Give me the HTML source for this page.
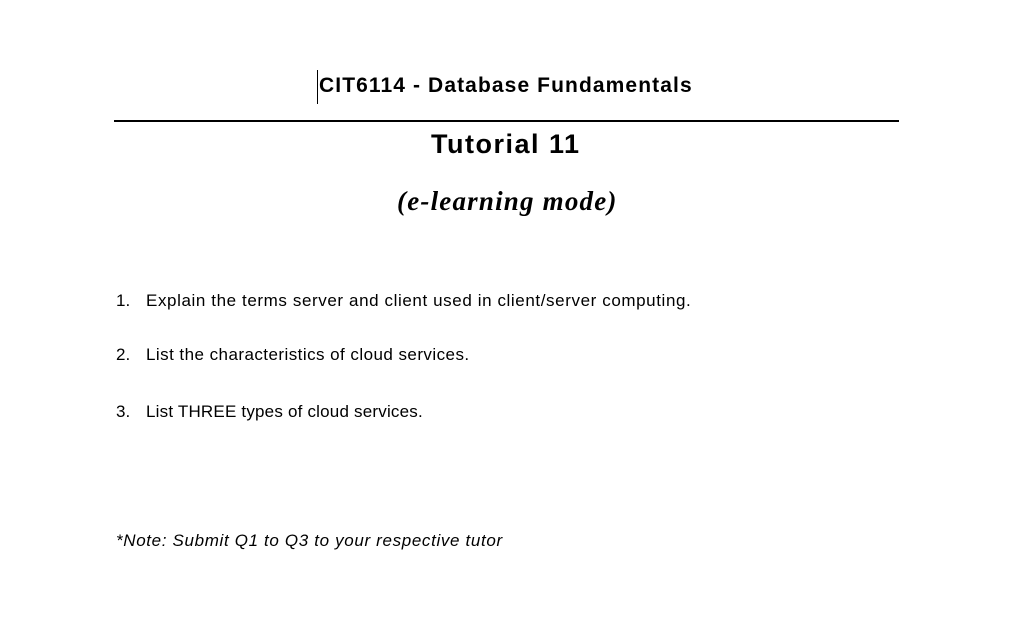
<!DOCTYPE html>
<html><head><meta charset="utf-8"><style>
body{margin:0;width:1009px;height:641px;background:#fff;position:relative;font-family:"Liberation Sans",sans-serif;color:#000;overflow:hidden}
.a{position:absolute;white-space:nowrap}
.t{font-size:17px;letter-spacing:0.6px}
</style></head><body>
<div class="a" style="left:317px;top:70px;width:1px;height:34px;background:#000"></div>
<div class="a" style="left:319px;top:74px;font-size:21px;font-weight:bold;letter-spacing:1.1px">CIT6114 - Database Fundamentals</div>
<div class="a" style="left:114px;top:120px;width:785px;height:2px;background:#000"></div>
<div class="a" style="left:431px;top:129px;font-size:27px;font-weight:bold;letter-spacing:1.5px">Tutorial 11</div>
<div class="a" style="left:397px;top:186px;font-size:27px;font-weight:bold;font-style:italic;font-family:'Liberation Serif',serif;letter-spacing:1.2px">(e-learning mode)</div>
<div class="a t" style="left:116px;top:291px;letter-spacing:0">1.</div>
<div class="a t" style="left:146px;top:291px">Explain the terms server and client used in client/server computing.</div>
<div class="a t" style="left:116px;top:345px;letter-spacing:0">2.</div>
<div class="a t" style="left:146px;top:345px;letter-spacing:0.45px">List the characteristics of cloud services.</div>
<div class="a t" style="left:116px;top:402px;letter-spacing:0">3.</div>
<div class="a t" style="left:146px;top:402px;letter-spacing:0.2px">List THREE types of cloud services.</div>
<div class="a t" style="left:116px;top:531px;font-style:italic;letter-spacing:0.65px">*Note: Submit Q1 to Q3 to your respective tutor</div>
</body></html>
